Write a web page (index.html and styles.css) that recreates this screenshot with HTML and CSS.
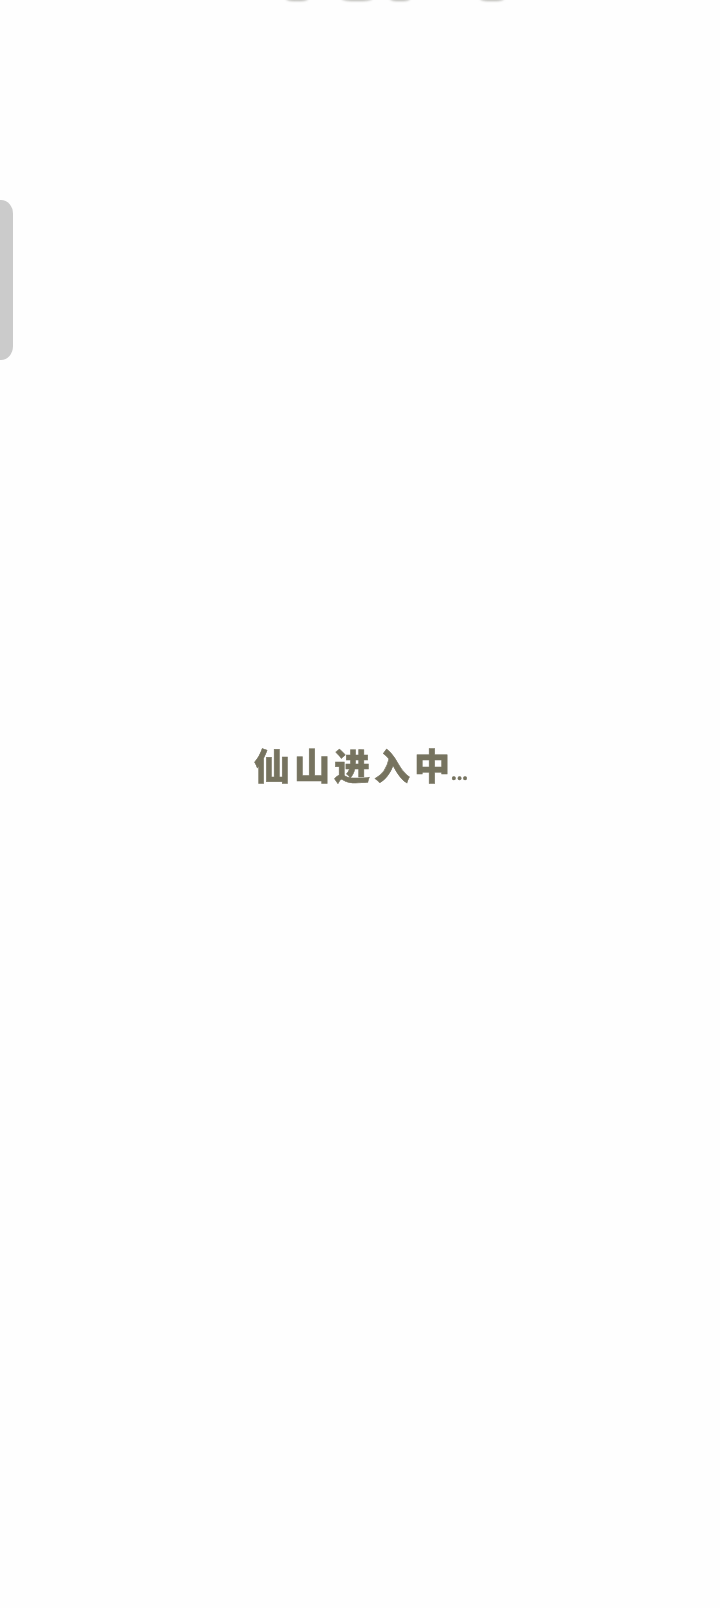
FILE: index.html
```html
<!DOCTYPE html>
<html lang="zh">
<head>
  <meta charset="UTF-8">
  <meta name="viewport" content="width=device-width, initial-scale=1.0">
  <title>仙山进入中</title>
  <link rel="stylesheet" href="styles.css">
</head>
<body>

  <!-- Artwork cut off by the top edge -->
  <div class="top-art">
    <span class="smudge smudge-a"></span>
    <span class="smudge smudge-b"></span>
    <span class="smudge smudge-c"></span>
    <span class="smudge smudge-d"></span>
  </div>

  <!-- Side tab -->
  <div class="side-tab"></div>

  <!-- Loading text -->
  <main class="loading">
    <p class="loading-text">仙山进入中<span class="dots">...</span></p>
  </main>

</body>
</html>
```

FILE: styles.css
```css
* { box-sizing: border-box; margin:0; padding:0; }

html, body { height: 100%; }

body {
  font-family: "Noto Sans CJK SC", "Noto Sans", sans-serif;
  background: #fefefe;
  overflow: hidden;
}

/* — TOP ARTWORK ————————————— */
.top-art {
  position: absolute;
  top: 0;
  left: 0;
  width: 100%;
  height: 3px;
  overflow: hidden;
}
.smudge {
  position: absolute;
  top: -3px;
  height: 4px;
  border-radius: 50%;
  background: #b5b5b0;
  filter: blur(1px);
}
.smudge-a { left: 286px; width: 22px; }
.smudge-b { left: 342px; width: 30px; }
.smudge-c { left: 390px; width: 20px; }
.smudge-d { left: 480px; width: 24px; }

/* — SIDE TAB ————————————— */
.side-tab {
  position: absolute;
  top: 200px;
  left: 0;
  width: 13px;
  height: 160px;
  background: #cbcbcb;
  border-radius: 0 12px 12px 0 / 0 14px 14px 0;
}

/* — LOADING ————————————— */
.loading {
  height: 100%;
  padding: 739px 0 0 254px;
}
.loading-text {
  font-size: 36px;
  line-height: 50px;
  font-weight: 900;
  color: #76735f;
  white-space: nowrap;
  letter-spacing: 4px;
  -webkit-text-stroke: 0.5px #76735f;
  filter: blur(0.5px);
}
.dots {
  font-size: 16px;
  letter-spacing: 0;
  margin-left: -3px;
}
```
